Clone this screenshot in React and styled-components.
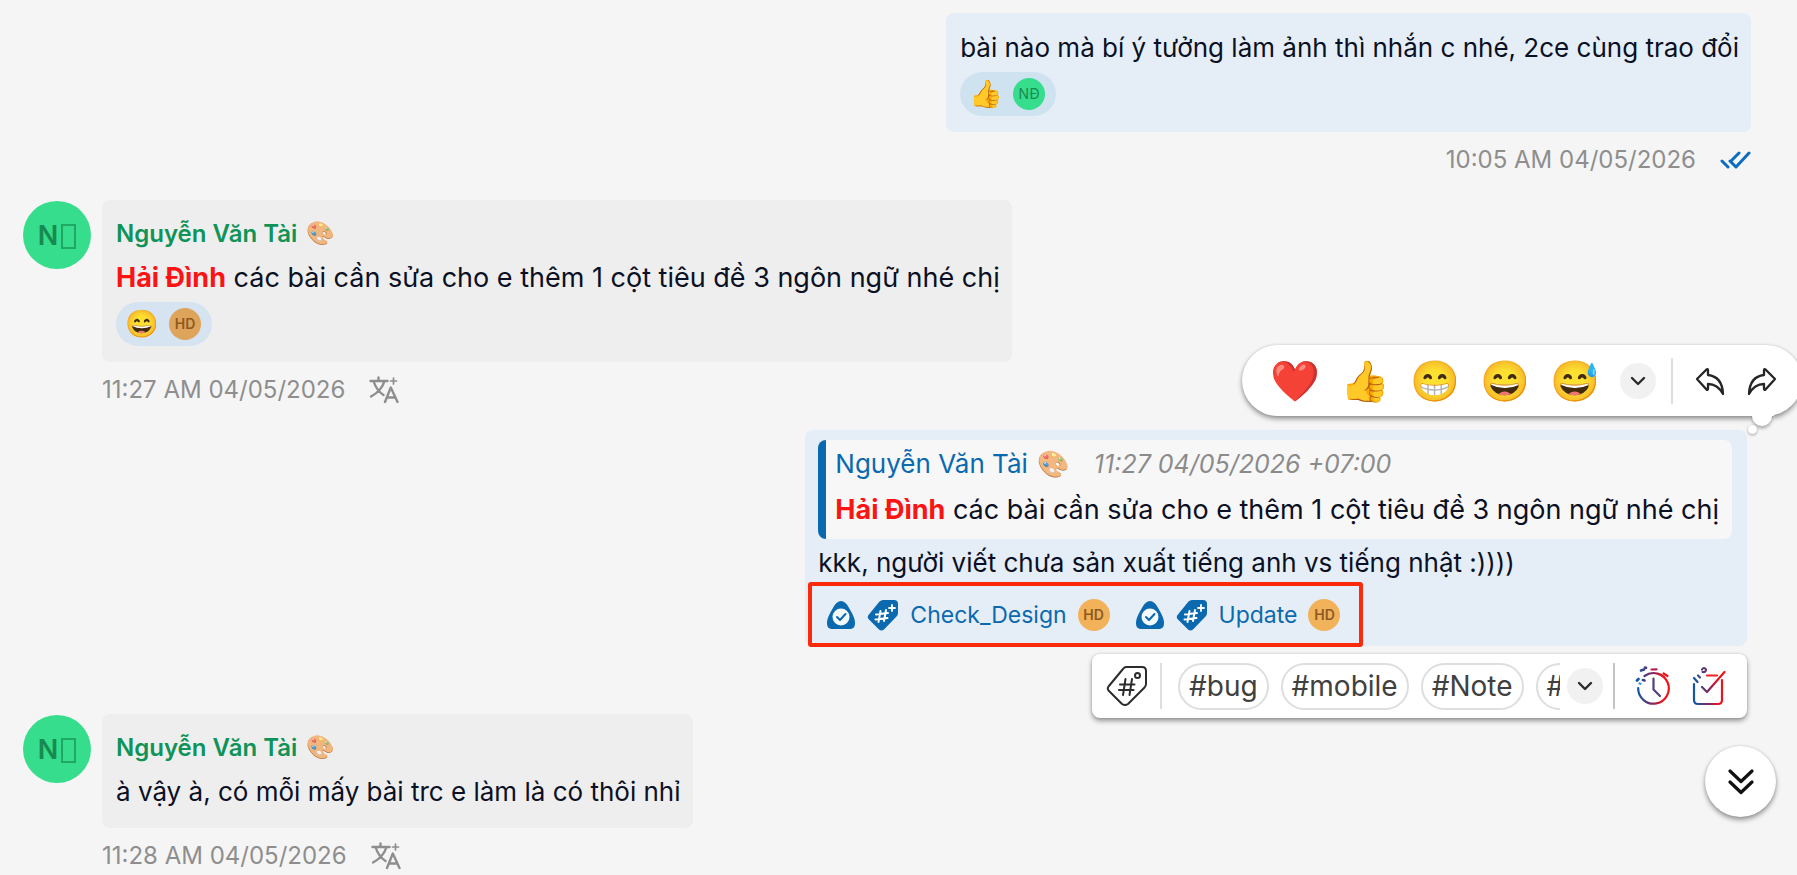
import React from "react";
import styled, { createGlobalStyle, css } from "styled-components";

const color = {
  page: "#f5f5f5",
  ink: "#0b1024",
  muted: "#8e8e8e",
  blue: "#0b69b0",
  green: "#0f9358",
  red: "#fb1414",
  own: "#e5eef6",
  other: "#eeeeee",
};

const GlobalStyle = createGlobalStyle`
  *, *::before, *::after { box-sizing: border-box; }
  body {
    margin: 0;
    background: ${color.page};
    color: ${color.ink};
    font-family: Inter, Roboto, "Noto Sans", sans-serif;
    font-size: 26px;
    line-height: 44px;
  }
  button { font: inherit; color: inherit; border: 0; padding: 0; background: none; cursor: pointer; }
  a { color: inherit; text-decoration: none; }
`;

const Page = styled.main`
  position: relative;
  height: 100vh;
  overflow: hidden;
`;

const Thread = styled.div`
  display: flex;
  flex-direction: column;
  gap: 12px;
  padding: 13px 46px 0 23px;
`;

const Row = styled.article`
  display: flex;
  align-items: flex-start;
  gap: 11px;
  justify-content: ${(p) => (p.$own ? "flex-end" : "flex-start")};
`;

const Stack = styled.div`
  display: flex;
  flex-direction: column;
  align-items: ${(p) => (p.$own ? "flex-end" : "flex-start")};
`;

const Selected = styled.div`
  position: relative;
  margin: 0 4px 56px 0;
`;

const Bubble = styled.div`
  display: flex;
  flex-direction: column;
  align-items: flex-start;
  gap: 2px;
  border-radius: 8px;
  background: ${(p) => (p.$own ? color.own : color.other)};
  padding: ${(p) => (p.$quoting ? "10px 15px 0 13px" : "13px 12px 14px 14px")};
`;

const Avatar = styled.span`
  flex: none;
  display: inline-flex;
  align-items: center;
  justify-content: center;
  border-radius: 50%;
  width: 32px;
  height: 32px;
  font-size: 14px;
  line-height: 1;
  font-weight: ${(p) => (p.$tone === "green" ? 400 : 600)};
  background: ${(p) => (p.$tone === "green" ? "#36dd8d" : p.$soft ? "#dfa45c" : "#f2b25a")};
  color: ${(p) => (p.$tone === "green" ? "#178a51" : "#8b5a22")};
  ${(p) =>
    p.$large &&
    css`
      width: 68px;
      height: 68px;
      margin-top: 1px;
      gap: 3px;
      font-size: 27px;
      font-weight: 600;
    `}
`;

const MissingGlyph = styled.span`
  width: 15px;
  height: 25px;
  margin-top: 2px;
  border: 2px solid #1fa765;
`;

const Name = styled.div`
  display: flex;
  align-items: center;
  gap: 9px;
  height: 41px;
  font-size: 24px;
  font-weight: 600;
  color: ${color.green};
`;

const Palette = styled.span`
  font-size: ${(p) => (p.$large ? 26 : 23)}px;
  line-height: 1;
  opacity: 0.75;
`;

const Text = styled.p`
  margin: 0;
  white-space: nowrap;
  font-size: ${(p) => (p.$request ? 27 : 26)}px;
`;

const Mention = styled.strong`
  font-weight: 700;
  color: ${color.red};
`;

const Reaction = styled.button`
  display: flex;
  align-items: center;
  gap: 10px;
  height: 44px;
  margin: 0 0 2px;
  padding: 0 11px 0 9px;
  border-radius: 22px;
  background: ${(p) => (p.$deep ? "#cfe2f0" : "#d5e4f0")};
`;

const ReactionEmoji = styled.span`
  width: 34px;
  text-align: center;
  font-size: 27px;
  line-height: 34px;
`;

const Meta = styled.div`
  display: flex;
  align-items: center;
  gap: 24px;
  height: 56px;
  font-size: 24px;
  color: ${color.muted};
`;

const Quote = styled.blockquote`
  display: flex;
  flex-direction: column;
  gap: 2px;
  margin: 0;
  padding: 2px 13px 7px 9px;
  border-left: 8px solid ${color.blue};
  border-radius: 8px;
  background: #f7f7f7;
`;

const QuoteHead = styled.div`
  display: flex;
  align-items: center;
  gap: 9px;
  height: 44px;
  color: ${color.blue};
`;

const QuoteTime = styled.time`
  margin-left: 16px;
  font-size: 25px;
  font-style: italic;
  color: #8b8b8b;
`;

const TagRow = styled.div`
  position: relative;
  display: flex;
  align-items: center;
  gap: 25px;
  height: 59px;
  padding: 0 23px 3px 8px;
`;

const Highlight = styled.span`
  position: absolute;
  inset: -5px 0 -1px -10px;
  border: 4px solid #fb2a0a;
  border-radius: 3px;
  pointer-events: none;
`;

const Tag = styled.a`
  display: flex;
  align-items: center;
  gap: 11px;
  font-size: 23px;
  color: ${color.blue};
`;

const floating = css`
  display: flex;
  align-items: center;
  background: #fff;
  box-shadow: 0 3px 5px rgba(0, 0, 0, 0.38), 0 0 3px rgba(0, 0, 0, 0.14);
`;

const EmojiBar = styled.div`
  ${floating}
  position: absolute;
  right: -55px;
  bottom: calc(100% + 14px);
  height: 71px;
  padding: 0 25px 0 18px;
  border-radius: 36px;
`;

const EmojiList = styled.div`
  display: flex;
  margin-right: 10px;
`;

const EmojiButton = styled.button`
  width: 70px;
  height: 60px;
  font-size: 40px;
  line-height: 60px;
  text-align: center;
`;

const Tail = styled.span`
  position: absolute;
  right: 30px;
  bottom: -10px;
  width: 20px;
  height: 20px;
  border-radius: 50%;
  background: #fff;
  box-shadow: 0 3px 3px rgba(0, 0, 0, 0.25);
  &::before {
    content: "";
    position: absolute;
    left: -2px;
    bottom: 10px;
    width: 24px;
    height: 10px;
    background: #fff;
  }
  &::after {
    content: "";
    position: absolute;
    left: -4px;
    top: 19px;
    width: 9px;
    height: 9px;
    border-radius: 50%;
    background: #fff;
    box-shadow: 0 1px 3px rgba(0, 0, 0, 0.35);
  }
`;

const RoundButton = styled.button`
  flex: none;
  display: flex;
  align-items: center;
  justify-content: center;
  width: 36px;
  height: 36px;
  border-radius: 50%;
  background: #f1f1f1;
`;

const Divider = styled.span`
  flex: none;
  width: 2px;
  height: 46px;
  background: ${(p) => (p.$dark ? "#c4c4c4" : "#dedede")};
`;

const IconButton = styled.button`
  flex: none;
  display: flex;
`;

const EmojiActions = styled.div`
  display: flex;
  align-items: center;
  gap: 22px;
  padding-left: 15px;
`;

const TagBar = styled.div`
  ${floating}
  position: absolute;
  right: 0;
  top: calc(100% + 8px);
  height: 64px;
  padding: 0 20px 0 14px;
  border-radius: 8px;
`;

const TagLead = styled.div`
  display: flex;
  align-items: center;
  gap: 12px;
`;

const TagChips = styled.div`
  display: flex;
  gap: 12px;
  width: 382px;
  margin: 0 7px 0 16px;
  overflow: hidden;
`;

const Chip = styled.button`
  flex: none;
  min-width: 80px;
  height: 47px;
  padding: 0 9px;
  border: 2px solid #dcdedf;
  border-radius: 24px;
  font-size: 28px;
  line-height: 43px;
  text-align: left;
  color: #404040;
`;

const TagActions = styled.div`
  display: flex;
  align-items: center;
  gap: 20px;
  padding-left: 10px;
`;

const ScrollDown = styled.button`
  ${floating}
  position: absolute;
  right: 21px;
  bottom: 58px;
  justify-content: center;
  width: 71px;
  height: 71px;
  border-radius: 50%;
`;

const Svg = styled.svg`
  display: block;
  flex: none;
  fill: none;
  stroke-linecap: round;
  stroke-linejoin: round;
`;

const DoubleCheck = () => (
  <Svg width="31" height="18" viewBox="0 0 31 18" stroke="#0b6cc0" strokeWidth="3">
    <path d="M2 10l6 6M10 10l6 6L29 2M12 9l7-7" />
  </Svg>
);

const Translate = () => (
  <Svg width="30" height="28" viewBox="0 0 30 28" stroke="#8e8e8e" strokeWidth="2.4">
    <path d="M1.500 5h17M9.500 1.500V5M4.500 5C6.500 11.500 10 16 14.500 19M15.500 5C13.500 12 8.500 17 2 20.500" />
    <path d="M16 26l5.800-14.500L28.500 26M18 21.500h8.500" />
    <path d="M24.500 2v6M21.500 5h6" strokeWidth="1.700" />
  </Svg>
);

const Chevron = () => (
  <Svg width="16" height="10" viewBox="0 0 16 10" strokeWidth="2.400" stroke="#2b2b2b">
    <path d="M2 2l6 6 6-6" />
  </Svg>
);

const Reply = () => (
  <Svg width="30" height="30" viewBox="0 0 30 30" strokeWidth="2.300" stroke="#252525">
    <path d="M2 13L11.500 3.500Q13 2.500 13 4.500V9C22 10 27.500 16.500 28 28C24.500 21.500 19.500 18 13 18V22.500Q13 24.500 11.500 23.500Z" />
  </Svg>
);

const Forward = () => (
  <Svg width="30" height="30" viewBox="0 0 30 30" strokeWidth="2.300" stroke="#252525">
    <path d="M28 13L18.500 3.500Q17 2.500 17 4.500V9C8 10 2.500 16.500 2 28C5.500 21.500 10.500 18 17 18V22.500Q17 24.500 18.500 23.500Z" />
  </Svg>
);

const Shield = () => (
  <Svg width="30" height="30" viewBox="0 0 30 30">
    <path d="M15 1C18 1 20.500 3.500 22.500 7C25.500 12 29 18 29 23C29 27.500 27 29 23 29H7C3 29 1 27.500 1 23C1 18 4.500 12 7.500 7C9.500 3.500 12 1 15 1Z" fill={color.blue} />
    <circle cx="15" cy="17" r="8.500" fill="#f4f9fd" />
    <path d="M11 17l3 3 5.500-6" stroke={color.blue} strokeWidth="2" />
  </Svg>
);

const HashTag = () => (
  <Svg width="32" height="32" viewBox="0 0 32 32">
    <path d="M16 1H27Q31 1 31 5V14Q31 16 29.500 17.500L17 30.500Q14.500 32.500 12 30.500L1.500 20Q0 18 1.500 16L12.500 2.500Q14 1 16 1Z" fill={color.blue} />
    <path d="M13.500 12l-2 11M19 11l-2 11M9 15.500l12-1.500M8.500 20.500l12-1.500" stroke="#fff" strokeWidth="2" />
    <path d="M25 6v6M22 9h6" stroke="#fff" strokeWidth="1.800" />
  </Svg>
);

const TagOutline = () => (
  <Svg width="42" height="42" viewBox="0 0 42 42" strokeWidth="2" stroke="#2c2c2c">
    <path d="M20 2H36Q40 2 40 6V19Q40 21 38.500 22.500L22 39Q19 41 16 39L2.500 25.500Q1 23.500 2.500 21.500L17 4Q18.500 2 20 2Z" />
    <circle cx="31.500" cy="10.500" r="2.500" />
    <path d="M19.500 14l-2.500 16M26 14l-2.500 16M14 19.500h14.500M13 25h14.500" />
  </Svg>
);

const Clock = () => (
  <Svg width="36" height="40" viewBox="0 0 36 40" strokeWidth="2.200">
    <defs>
      <linearGradient id="clockInk" gradientUnits="userSpaceOnUse" x1="3" y1="0" x2="33" y2="0">
        <stop offset="0" stopColor="#1257a6" />
        <stop offset="0.450" stopColor="#7b2a63" />
        <stop offset="0.850" stopColor="#f01218" />
      </linearGradient>
    </defs>
    <g stroke="url(#clockInk)">
      <path d="M9.500 10A15.300 15.300 0 1 1 3.200 22" />
      <path d="M18.500 12.500v11l6.500 6.500" stroke="#53407f" />
      <path d="M16.500 3.500l5-.2" stroke="#b02048" />
      <path d="M28.500 7.500l4 2.500" />
      <path d="M6 4.500l3-1M10 1.500l1 .3M2 14.500l1.500-1.500M8 14l1.500 .5" strokeWidth="2.600" />
      <path d="M4.500 17.500l1 .3" stroke="#2d8edb" />
    </g>
  </Svg>
);

const Task = () => (
  <Svg width="36" height="40" viewBox="0 0 36 40" strokeWidth="2.200">
    <defs>
      <linearGradient id="taskInk" gradientUnits="userSpaceOnUse" x1="3" y1="0" x2="33" y2="0">
        <stop offset="0" stopColor="#1257a6" />
        <stop offset="0.480" stopColor="#7b2a63" />
        <stop offset="0.850" stopColor="#f01218" />
      </linearGradient>
    </defs>
    <g stroke="url(#taskInk)">
      <path d="M3 18V34Q3 38 7 38H27Q31 38 31 34V14" />
      <path d="M16 9.500H26" stroke="#ee2025" />
      <path d="M11 21l5 5L33.500 6" />
      <path d="M11 3.500q2-3 4 0q0 3-3.500 2.500" />
      <path d="M3 12l3.500 4M7 9.500l2 2" />
    </g>
  </Svg>
);

const DoubleDown = () => (
  <Svg width="26" height="26" viewBox="0 0 26 26" strokeWidth="3.200" stroke="#111">
    <path d="M2 2l11 10.500L24 2M2 13l11 10.500L24 13" />
  </Svg>
);

const UserAvatar = () => (
  <Avatar $tone="green" $large>
    N<MissingGlyph />
  </Avatar>
);

const MessageTag = ({ label }) => (
  <Tag href="#">
    <Shield />
    <HashTag />
    <span>{label}</span>
    <Avatar>HD</Avatar>
  </Tag>
);

const SenderName = () => (
  <Name>
    Nguyễn Văn Tài <Palette>🎨</Palette>
  </Name>
);

const Request = () => (
  <Text $request>
    <Mention>Hải Đình</Mention> các bài cần sửa cho e thêm 1 cột tiêu đề 3 ngôn ngữ nhé chị
  </Text>
);

const quickEmojis = [
  ["❤️", "Heart"],
  ["👍", "Like"],
  ["😁", "Grin"],
  ["😄", "Laugh"],
  ["😅", "Sweat smile"],
];

const quickTags = ["#bug", "#mobile", "#Note", "#"];

export default function App() {
  return (
    <Page>
      <GlobalStyle />
      <Thread>
        <Row $own>
          <Stack $own>
            <Bubble $own>
              <Text>bài nào mà bí ý tưởng làm ảnh thì nhắn c nhé, 2ce cùng trao đổi</Text>
              <Reaction $deep>
                <ReactionEmoji>👍</ReactionEmoji>
                <Avatar $tone="green">NĐ</Avatar>
              </Reaction>
            </Bubble>
            <Meta>
              <time>10:05 AM 04/05/2026</time>
              <DoubleCheck />
            </Meta>
          </Stack>
        </Row>

        <Row>
          <UserAvatar />
          <Stack>
            <Bubble>
              <SenderName />
              <Request />
              <Reaction>
                <ReactionEmoji>😄</ReactionEmoji>
                <Avatar $soft>HD</Avatar>
              </Reaction>
            </Bubble>
            <Meta>
              <time>11:27 AM 04/05/2026</time>
              <IconButton aria-label="Translate">
                <Translate />
              </IconButton>
            </Meta>
          </Stack>
        </Row>

        <Row $own>
          <Selected>
            <Bubble $own $quoting>
              <Quote>
                <QuoteHead>
                  <span>Nguyễn Văn Tài</span>
                  <Palette $large>🎨</Palette>
                  <QuoteTime>11:27 04/05/2026 +07:00</QuoteTime>
                </QuoteHead>
                <Request />
              </Quote>
              <Text>kkk, người viết chưa sản xuất tiếng anh vs tiếng nhật :))))</Text>
              <TagRow>
                <MessageTag label="Check_Design" />
                <MessageTag label="Update" />
                <Highlight />
              </TagRow>
            </Bubble>

            <EmojiBar>
              <EmojiList>
                {quickEmojis.map(([emoji, label]) => (
                  <EmojiButton key={label} aria-label={label}>
                    {emoji}
                  </EmojiButton>
                ))}
              </EmojiList>
              <RoundButton aria-label="More reactions">
                <Chevron />
              </RoundButton>
              <EmojiActions>
                <Divider />
                <IconButton aria-label="Reply">
                  <Reply />
                </IconButton>
                <IconButton aria-label="Forward">
                  <Forward />
                </IconButton>
              </EmojiActions>
              <Tail />
            </EmojiBar>

            <TagBar>
              <TagLead>
                <IconButton aria-label="Add tag">
                  <TagOutline />
                </IconButton>
                <Divider />
              </TagLead>
              <TagChips>
                {quickTags.map((tag) => (
                  <Chip key={tag}>{tag}</Chip>
                ))}
              </TagChips>
              <RoundButton aria-label="More tags">
                <Chevron />
              </RoundButton>
              <TagActions>
                <Divider $dark />
                <IconButton aria-label="Set reminder">
                  <Clock />
                </IconButton>
                <IconButton aria-label="Create task">
                  <Task />
                </IconButton>
              </TagActions>
            </TagBar>
          </Selected>
        </Row>

        <Row>
          <UserAvatar />
          <Stack>
            <Bubble>
              <SenderName />
              <Text>à vậy à, có mỗi mấy bài trc e làm là có thôi nhỉ</Text>
            </Bubble>
            <Meta>
              <time>11:28 AM 04/05/2026</time>
              <IconButton aria-label="Translate">
                <Translate />
              </IconButton>
            </Meta>
          </Stack>
        </Row>
      </Thread>

      <ScrollDown aria-label="Scroll to latest">
        <DoubleDown />
      </ScrollDown>
    </Page>
  );
}
